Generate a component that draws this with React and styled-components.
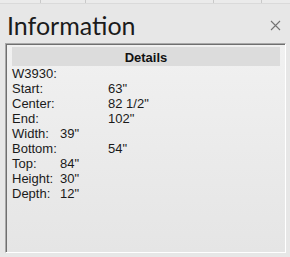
import React from "react";
import styled, { createGlobalStyle } from "styled-components";

const GlobalStyle = createGlobalStyle`
  html, body {
    margin: 0;
    padding: 0;
    background: #e7e7e7;
  }
`;

const Window = styled.div`
  width: 290px;
  height: 257px;
  background: #e7e7e7;
  display: flex;
  flex-direction: column;
  box-sizing: border-box;
  overflow: hidden;
`;

const TopStrip = styled.div`
  height: 3px;
  display: flex;
  border-bottom: 1px solid #dadada;
  background: #ebebeb;
`;

const StripCell = styled.div`
  width: ${(p) => p.$w}px;
  border-right: 1px solid #c9c9c9;
`;

const TitleBar = styled.div`
  height: 39px;
  display: flex;
  align-items: center;
  justify-content: space-between;
  padding: 3px 9px 0 7px;
  box-sizing: border-box;
`;

const Title = styled.h1`
  margin: 0;
  font-family: Lato, "Open Sans", sans-serif;
  font-weight: 400;
  font-size: 25px;
  line-height: 36px;
  color: #1b1b1b;
`;

const CloseButton = styled.button`
  border: 0;
  background: none;
  padding: 0;
  width: 11px;
  height: 11px;
  display: flex;
  cursor: pointer;
`;

const Panel = styled.div`
  flex: 1;
  margin: 0 4px 4px 5px;
  border-top: 1px solid #a9a9a9;
  border-left: 1px solid #a9a9a9;
  border-right: 1px solid #ffffff;
  border-bottom: 1px solid #ffffff;
  box-shadow: inset 1px 1px 0 #6f6f6f;
  background: linear-gradient(#f1f1f1, #e5e5e5);
  padding: 3px 5px 0 6px;
  display: flex;
  flex-direction: column;
`;

const SectionHeader = styled.div`
  height: 19px;
  background: #dcdcdc;
  text-align: center;
  font-family: "Liberation Sans", Arial, sans-serif;
  font-weight: 700;
  font-size: 13px;
  line-height: 21px;
  color: #111;
`;

const List = styled.div`
  display: flex;
  flex-direction: column;
  font-family: "Liberation Sans", Arial, sans-serif;
  font-size: 13px;
  line-height: 15px;
  color: #1a1a1a;
`;

const Row = styled.div`
  display: grid;
  grid-template-columns: ${(p) => (p.$wide ? "96px" : "48px")} auto;
`;

const rows = [
  { label: "W3930:", value: "", wide: true },
  { label: "Start:", value: '63"', wide: true },
  { label: "Center:", value: '82 1/2"', wide: true },
  { label: "End:", value: '102"', wide: true },
  { label: "Width:", value: '39"' },
  { label: "Bottom:", value: '54"', wide: true },
  { label: "Top:", value: '84"' },
  { label: "Height:", value: '30"' },
  { label: "Depth:", value: '12"' },
];

export default function App() {
  return (
    <Window>
      <GlobalStyle />
      <TopStrip>
        <StripCell $w={40} />
        <StripCell $w={44} />
        <StripCell $w={127} />
        <StripCell $w={47} />
      </TopStrip>
      <TitleBar>
        <Title>Information</Title>
        <CloseButton aria-label="Close">
          <svg width="11" height="11" viewBox="0 0 11 11">
            <path d="M1 1 L10 10 M10 1 L1 10" stroke="#737373" strokeWidth="1.1" fill="none" />
          </svg>
        </CloseButton>
      </TitleBar>
      <Panel>
        <SectionHeader>Details</SectionHeader>
        <List>
          {rows.map((r) => (
            <Row key={r.label} $wide={r.wide}>
              <span>{r.label}</span>
              <span>{r.value}</span>
            </Row>
          ))}
        </List>
      </Panel>
    </Window>
  );
}
